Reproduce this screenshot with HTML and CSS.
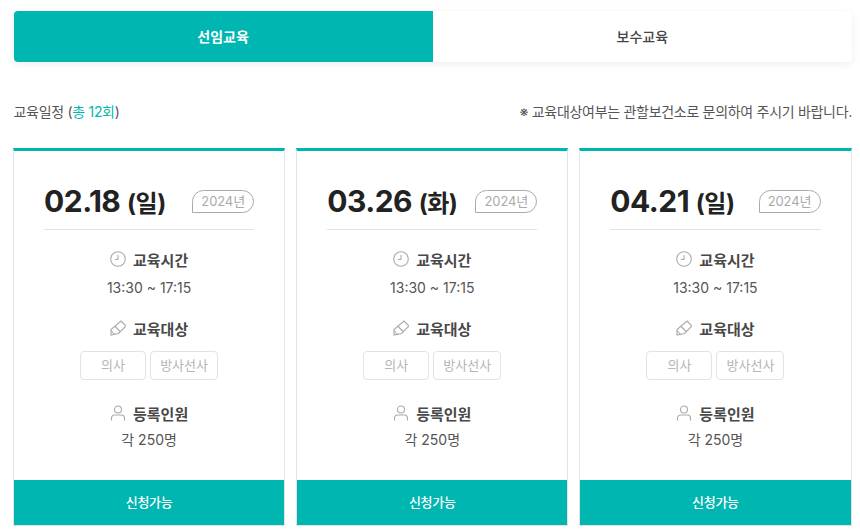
FILE: index.html
```html
<!DOCTYPE html>
<html lang="ko">
<head>
    <meta charset="UTF-8">
    <title>교육일정</title>
    <link rel="stylesheet" href="styles.css">
</head>
<body>
    <div class="tabs">
        <a class="tab active">선임교육</a>
        <a class="tab">보수교육</a>
    </div>

    <div class="info-row">
        <p>교육일정 (<span class="count">총 12회</span>)</p>
        <p>※ 교육대상여부는 관할보건소로 문의하여 주시기 바랍니다.</p>
    </div>

    <div class="cards">
        <div class="card">
            <div class="card-body">
                <div class="date-row">
                    <div class="date">02.18 <span class="day">(일)</span></div>
                    <span class="year">2024년</span>
                </div>
                <div class="label time-label">
                    <svg class="icon" viewBox="0 0 16 16"><circle cx="8" cy="8" r="7.3"/><path d="M8 4v4.5H5"/></svg>
                    교육시간
                </div>
                <div class="value">13:30 ~ 17:15</div>
                <div class="label target-label">
                    <svg class="icon" viewBox="0 0 16 16"><path d="M11 1 16 6 8.5 13.5 1 15 1 9.5Z"/><path d="M4.7 6 10 11.5M1 10.5 5 15"/></svg>
                    교육대상
                </div>
                <div class="chips"><span class="chip wide">의사</span><span class="chip">방사선사</span></div>
                <div class="label people-label">
                    <svg class="icon" viewBox="0 0 16 16"><circle cx="8" cy="4.5" r="3.5"/><path d="M1.5 15.5V13a3 3 0 0 1 3-3h7a3 3 0 0 1 3 3v2.5"/></svg>
                    등록인원
                </div>
                <div class="value people">각 250명</div>
            </div>
            <a class="apply">신청가능</a>
        </div>

        <div class="card">
            <div class="card-body">
                <div class="date-row">
                    <div class="date">03.26 <span class="day">(화)</span></div>
                    <span class="year">2024년</span>
                </div>
                <div class="label time-label">
                    <svg class="icon" viewBox="0 0 16 16"><circle cx="8" cy="8" r="7.3"/><path d="M8 4v4.5H5"/></svg>
                    교육시간
                </div>
                <div class="value">13:30 ~ 17:15</div>
                <div class="label target-label">
                    <svg class="icon" viewBox="0 0 16 16"><path d="M11 1 16 6 8.5 13.5 1 15 1 9.5Z"/><path d="M4.7 6 10 11.5M1 10.5 5 15"/></svg>
                    교육대상
                </div>
                <div class="chips"><span class="chip wide">의사</span><span class="chip">방사선사</span></div>
                <div class="label people-label">
                    <svg class="icon" viewBox="0 0 16 16"><circle cx="8" cy="4.5" r="3.5"/><path d="M1.5 15.5V13a3 3 0 0 1 3-3h7a3 3 0 0 1 3 3v2.5"/></svg>
                    등록인원
                </div>
                <div class="value people">각 250명</div>
            </div>
            <a class="apply">신청가능</a>
        </div>

        <div class="card">
            <div class="card-body">
                <div class="date-row">
                    <div class="date">04.21 <span class="day">(일)</span></div>
                    <span class="year">2024년</span>
                </div>
                <div class="label time-label">
                    <svg class="icon" viewBox="0 0 16 16"><circle cx="8" cy="8" r="7.3"/><path d="M8 4v4.5H5"/></svg>
                    교육시간
                </div>
                <div class="value">13:30 ~ 17:15</div>
                <div class="label target-label">
                    <svg class="icon" viewBox="0 0 16 16"><path d="M11 1 16 6 8.5 13.5 1 15 1 9.5Z"/><path d="M4.7 6 10 11.5M1 10.5 5 15"/></svg>
                    교육대상
                </div>
                <div class="chips"><span class="chip wide">의사</span><span class="chip">방사선사</span></div>
                <div class="label people-label">
                    <svg class="icon" viewBox="0 0 16 16"><circle cx="8" cy="4.5" r="3.5"/><path d="M1.5 15.5V13a3 3 0 0 1 3-3h7a3 3 0 0 1 3 3v2.5"/></svg>
                    등록인원
                </div>
                <div class="value people">각 250명</div>
            </div>
            <a class="apply">신청가능</a>
        </div>
    </div>
</body>
</html>
```

FILE: styles.css
```css
html, body {
    margin: 0;
    height: 530px;
    overflow: hidden;
}
body {
    font-family: Inter, "Noto Sans CJK KR", sans-serif;
    color: #444;
    background: #fff;
    padding: 11px 8px 0 13.5px;
    box-sizing: border-box;
}
.tabs {
    display: flex;
    height: 51px;
    border-radius: 4px;
    box-shadow: 0 2px 8px rgba(0, 0, 0, 0.07);
    overflow: hidden;
}
.tab {
    flex: 1;
    display: flex;
    align-items: center;
    justify-content: center;
    padding-bottom: 2px;
    box-sizing: border-box;
    font-size: 14px;
    font-weight: 500;
    color: #444;
    background: #fff;
}
.tab.active {
    background: #00b6b1;
    color: #fff;
    font-weight: 700;
}
.info-row {
    display: flex;
    justify-content: space-between;
    align-items: center;
    margin: 39px 0 27px;
    height: 20px;
    font-size: 14px;
    letter-spacing: -0.3px;
    color: #555;
}
.info-row p {
    margin: 0;
}
.count {
    color: #00b6b1;
}
.cards {
    display: flex;
    gap: 11px;
    margin-left: -0.5px;
    margin-right: 0.5px;
}
.card {
    flex: 1;
    height: 378px;
    box-sizing: border-box;
    border: 1px solid #e2e2e2;
    border-top: 3px solid #00b6b1;
    display: flex;
    flex-direction: column;
}
.card-body {
    flex: 1;
    padding: 0 30px;
    text-align: center;
}
.date-row {
    display: flex;
    justify-content: space-between;
    align-items: center;
    height: 79px;
    border-bottom: 1px solid #e2e2e2;
    box-sizing: border-box;
    padding-top: 22px;
}
.date {
    font-size: 30px;
    font-weight: 700;
    letter-spacing: -0.5px;
    color: #222;
    white-space: nowrap;
}
.day {
    font-size: 24px;
}
.year {
    width: 62px;
    height: 23px;
    box-sizing: border-box;
    border: 1px solid #aaa;
    border-radius: 12px 12px 12px 0;
    font-size: 13px;
    letter-spacing: -0.1px;
    line-height: 20px;
    color: #aaa;
    text-align: center;
}
.label {
    display: flex;
    align-items: center;
    justify-content: center;
    gap: 7px;
    height: 20px;
    font-size: 15px;
    font-weight: 700;
    color: #484848;
}
.time-label {
    margin-top: 19px;
}
.target-label {
    margin-top: 20px;
}
.people-label {
    margin-top: 23px;
}
.icon {
    width: 16px;
    height: 16px;
    fill: none;
    stroke: #aaa;
    stroke-width: 1.1;
}
.value {
    margin-top: 9px;
    height: 20px;
    line-height: 20px;
    font-size: 14px;
    color: #555;
}
.people {
    margin-top: 7px;
}
.chips {
    display: flex;
    justify-content: center;
    gap: 4px;
    margin-top: 13px;
}
.chip {
    box-sizing: border-box;
    width: 68px;
    height: 29px;
    border: 1px solid #e2e2e2;
    border-radius: 4px;
    font-size: 13px;
    line-height: 26px;
    color: #b5b5b5;
    text-align: center;
}
.chip.wide {
    width: 66px;
}
.apply {
    height: 45px;
    padding-bottom: 3px;
    box-sizing: border-box;
    display: flex;
    align-items: center;
    justify-content: center;
    background: #00b6b1;
    color: #fff;
    font-size: 13px;
    letter-spacing: -0.3px;
    font-weight: 500;
}
```
